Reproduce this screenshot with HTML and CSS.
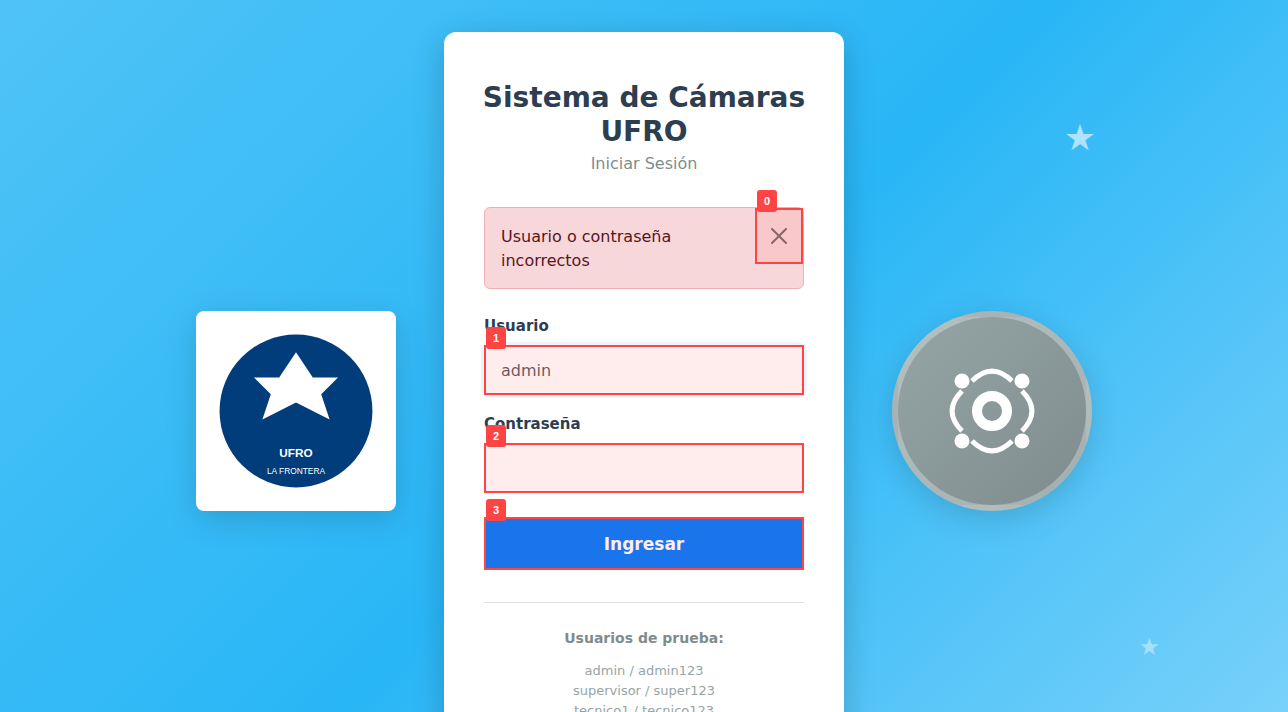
FILE: index.html
```html
<!DOCTYPE html>
<html lang="es">
<head>
  <meta charset="utf-8">
  <meta name="viewport" content="width=device-width, initial-scale=1">
  <title>Sistema de Cámaras UFRO</title>
  <link rel="stylesheet" href="styles.css">
</head>
<body>
  <div class="page">
    <span class="star star-top" aria-hidden="true">★</span>
    <span class="star star-bottom" aria-hidden="true">★</span>

    <div class="logo logo-square">
      <svg viewBox="0 0 200 200" role="img" aria-label="UFRO La Frontera">
        <circle cx="100" cy="100" r="91" fill="#003d7a"/>
        <polygon points="100,30 120,60 150,60 130,80 140,110 100,90 60,110 70,80 50,60 80,60" fill="#fff"/>
        <text class="logo-name" x="100" y="155">UFRO</text>
        <text class="logo-sub" x="100" y="175">LA FRONTERA</text>
      </svg>
    </div>

    <main class="card">
      <header class="card-header">
        <h1>Sistema de Cámaras<br>UFRO</h1>
        <p>Iniciar Sesión</p>
      </header>

      <div class="alert" role="alert">
        <span class="alert-text">Usuario o contraseña incorrectos</span>
        <div class="mark">
          <button class="close" type="button" aria-label="Cerrar">
            <svg viewBox="0 0 16 16" width="16" height="16"><path d="M.293.293a1 1 0 0 1 1.414 0L8 6.586 14.293.293a1 1 0 1 1 1.414 1.414L9.414 8l6.293 6.293a1 1 0 0 1-1.414 1.414L8 9.414l-6.293 6.293a1 1 0 0 1-1.414-1.414L6.586 8 .293 1.707a1 1 0 0 1 0-1.414z"/></svg>
          </button>
          <span class="badge">0</span>
        </div>
      </div>

      <form class="form">
        <div class="field">
          <label for="user">Usuario</label>
          <div class="mark">
            <input class="active" id="user" type="text" placeholder="admin">
            <span class="badge">1</span>
          </div>
        </div>
        <div class="field">
          <label for="pass">Contraseña</label>
          <div class="mark">
            <input id="pass" type="password">
            <span class="badge">2</span>
          </div>
        </div>
        <div class="mark submit">
          <button class="primary" type="submit">Ingresar</button>
          <span class="badge">3</span>
        </div>
      </form>

      <footer class="hints">
        <strong>Usuarios de prueba:</strong>
        <ul>
          <li>admin / admin123</li>
          <li>supervisor / super123</li>
          <li>tecnico1 / tecnico123</li>
        </ul>
      </footer>
    </main>

    <div class="logo logo-round">
      <svg viewBox="0 0 100 100" width="100" height="100" fill="none" stroke="#fff" stroke-width="5" aria-hidden="true">
        <circle cx="50" cy="50" r="15" stroke-width="10"/>
        <path d="M30 20Q50 0 70 20M80 30Q100 50 80 70M70 80Q50 100 30 80M20 70Q0 50 20 30"/>
        <g fill="#fff" stroke="none">
          <circle cx="20" cy="20" r="7.5"/>
          <circle cx="80" cy="20" r="7.5"/>
          <circle cx="20" cy="80" r="7.5"/>
          <circle cx="80" cy="80" r="7.5"/>
        </g>
      </svg>
    </div>
  </div>
</body>
</html>
```

FILE: styles.css
```css
* {
  box-sizing: border-box;
}

html {
  scrollbar-width: none;
}

body {
  margin: 0;
  color: #2c3e50;
  font: 16px/24px Verdana, "DejaVu Sans", sans-serif;
}

.page {
  position: relative;
  display: flex;
  align-items: center;
  justify-content: center;
  gap: 48px;
  min-height: 100vh;
  padding: 32px;
  overflow: hidden;
  background: linear-gradient(135deg, #4fc3f7 0%, #29b6f6 50%, #81d4fa 100%);
}

.star {
  position: absolute;
  color: #fff;
  line-height: 1;
}

.star-top {
  top: 120px;
  right: 192px;
  font-size: 36px;
  opacity: 0.6;
}

.star-bottom {
  right: 128px;
  bottom: 162px;
  font-size: 24px;
  opacity: 0.4;
}

.logo {
  flex: none;
  display: flex;
  align-items: center;
  justify-content: center;
  width: 200px;
  height: 200px;
  box-shadow: 0 8px 32px rgba(0, 0, 0, 0.15);
}

.logo-square {
  padding: 16px;
  border-radius: 8px;
  background: #fff;
}

.logo-square svg {
  width: 100%;
}

.logo-square text {
  fill: #fff;
  font-family: "Liberation Sans", Arial, sans-serif;
  text-anchor: middle;
}

.logo-name {
  font-size: 14px;
  font-weight: bold;
}

.logo-sub {
  font-size: 10px;
}

.logo-round {
  border: 6px solid rgba(255, 255, 255, 0.3);
  border-radius: 50%;
  background: linear-gradient(135deg, #95a5a6, #7f8c8d);
}

.card {
  width: 100%;
  max-width: 400px;
  padding: 49px 40px 68px;
  border-radius: 12px;
  background: #fff;
  box-shadow: 0 8px 32px rgba(0, 0, 0, 0.2);
}

.card-header {
  margin-bottom: 31px;
  text-align: center;
}

.card-header h1 {
  margin: 0 -8px 3px;
  font-size: 28px;
  line-height: 34px;
}

.card-header p {
  margin: 0;
  color: #7f8c8d;
}

.mark {
  position: relative;
}

.mark::after {
  content: "";
  position: absolute;
  inset: 0;
  border: 2px solid #ff4444;
  background: rgba(255, 68, 68, 0.1);
  pointer-events: none;
}

.badge {
  position: absolute;
  z-index: 1;
  top: -18px;
  left: 2px;
  width: 20px;
  border-radius: 3px;
  background: #ff4444;
  color: #fff;
  font: bold 11px/22px "Liberation Sans", Arial, sans-serif;
  text-align: center;
}

.alert {
  display: flex;
  align-items: flex-start;
  justify-content: space-between;
  margin-bottom: 25px;
  border: 1px solid #f1aeb5;
  border-radius: 6px;
  background: #f8d7da;
  color: #58151c;
}

.alert-text {
  padding: 17px 16px 15px;
}

.close {
  display: block;
  padding: 20px 16px;
  border: 0;
  background: none;
  opacity: 0.5;
}

.close svg {
  display: block;
}

.field {
  margin-bottom: 17px;
}

.field label {
  display: block;
  margin-bottom: 7px;
  font-size: 15px;
  font-weight: bold;
}

.field input {
  display: block;
  width: 100%;
  height: 50px;
  padding: 12px 17px;
  border: 0;
  border-radius: 6px;
  background: #fff;
  color: #212529;
  font: inherit;
}

.field input::placeholder {
  color: rgba(33, 37, 41, 0.75);
  opacity: 1;
}

.field .active {
  box-shadow: 0 0 0 3px rgba(102, 126, 234, 0.1);
}

.submit {
  margin: 24px 0 32px;
}

.primary {
  display: block;
  width: 100%;
  padding: 15px 14px 13px;
  border: 0;
  background: #007bff;
  color: #fff;
  font: bold 17px/25px Verdana, "DejaVu Sans", sans-serif;
}

.hints {
  padding-top: 23px;
  border-top: 1px solid #dee2e6;
  color: #7f8c8d;
  font-size: 14px;
  text-align: center;
}

.hints ul {
  margin: 11px 0 0;
  padding: 0;
  color: #95a5a6;
  font-size: 13px;
  line-height: 20px;
  list-style: none;
}
```
